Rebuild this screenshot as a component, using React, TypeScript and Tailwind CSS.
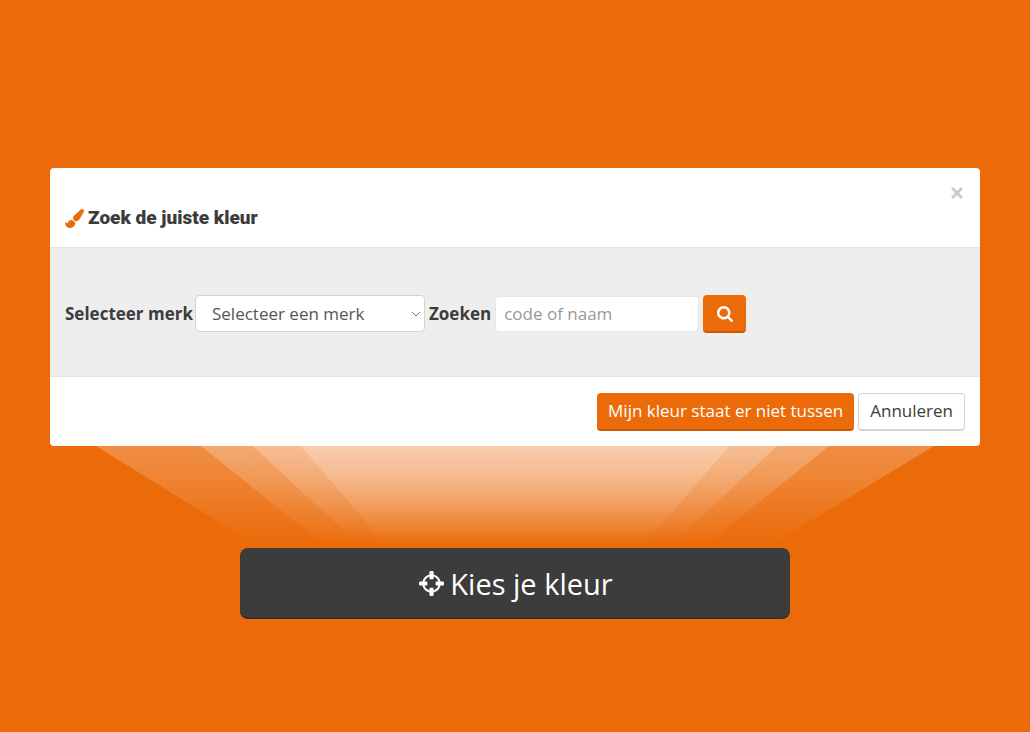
import React from "react";

function Glyph({ d, className, box = 1792 }: { d: string; className: string; box?: number }) {
  return (
    <svg viewBox={`0 0 ${box} ${box}`} className={className} fill="currentColor" aria-hidden="true">
      <path d={d} />
    </svg>
  );
}

const BRUSH =
  "M1615 0q70 0 122.5 46.5t52.5 116.5q0 63-45 151-332 629-465 752-97 91-218 91-126 0-216.5-92.5t-90.5-219.5q0-128 92-212l638-579q59-54 130-54zm-909 1034q39 76 106.5 130t150.5 76l1 71q4 213-129.5 347t-348.5 134q-123 0-218-46.5t-152.5-127.5-86.5-183-29-220q7 5 41 30t62 44.5 59 36.5 46 17q41 0 55-37 25-66 57.5-112.5t69.5-76 88-47.5 103-25.5 125-10.5z";
const SEARCH =
  "M1152 704q0-185-131.5-316.5t-316.5-131.5-316.5 131.5-131.5 316.5 131.5 316.5 316.5 131.5 316.5-131.5 131.5-316.5zm512 832q0 52-38 90t-90 38q-54 0-90-38l-343-342q-179 124-399 124-143 0-273.5-55.5t-225-150-150-225-55.5-273.5 55.5-273.5 150-225 225-150 273.5-55.5 273.5 55.5 225 150 150 225 55.5 273.5q0 220-124 399l343 343q37 37 37 90z";
const CROSSHAIRS =
  "M1325 1024h-109q-26 0-45-19t-19-45v-128q0-26 19-45t45-19h109q-32-108-112.5-188.5t-188.5-112.5v109q0 26-19 45t-45 19h-128q-26 0-45-19t-19-45v-109q-108 32-188.5 112.5t-112.5 188.5h109q26 0 45 19t19 45v128q0 26-19 45t-45 19h-109q32 108 112.5 188.5t188.5 112.5v-109q0-26 19-45t45-19h128q26 0 45 19t19 45v109q108-32 188.5-112.5t112.5-188.5zm339-192v128q0 26-19 45t-45 19h-143q-37 161-154.5 278.5t-278.5 154.5v143q0 26-19 45t-45 19h-128q-26 0-45-19t-19-45v-143q-161-37-278.5-154.5t-154.5-278.5h-143q-26 0-45-19t-19-45v-128q0-26 19-45t45-19h143q37-161 154.5-278.5t278.5-154.5v-143q0-26 19-45t45-19h128q26 0 45 19t19 45v143q161 37 278.5 154.5t154.5 278.5h143q26 0 45 19t19 45z";

function Rays() {
  return (
    <svg viewBox="0 0 930 102" preserveAspectRatio="none" className="block h-[102px] w-full" aria-hidden="true">
      <defs>
        <linearGradient id="ray" x1="0" y1="0" x2="0" y2="102" gradientUnits="userSpaceOnUse">
          <stop offset="0" stopColor="#fff" stopOpacity="0.24" />
          <stop offset="0.3" stopColor="#fff" stopOpacity="0.175" />
          <stop offset="0.65" stopColor="#fff" stopOpacity="0.08" />
          <stop offset="0.97" stopColor="#fff" stopOpacity="0" />
        </linearGradient>
      </defs>
      <g fill="url(#ray)">
        <polygon points="46,0 884,0 716,102 210,102" />
        <polygon points="151,0 779,0 652,102 278,102" />
        <polygon points="203,0 727,0 618,102 312,102" />
        <polygon points="251,0 679,0 592,102 338,102" />
      </g>
    </svg>
  );
}

export default function App() {
  return (
    <main className="flex min-h-screen flex-col bg-[#eb6b0a] px-[50px] pt-[168px] pb-28 font-['Open_Sans',sans-serif] text-[17px] leading-6 text-[#3c3c3c]">
      <section role="dialog" aria-labelledby="title" className="rounded bg-white">
        <header className="flex h-20 items-start justify-between border-b border-[#e5e5e5] px-[15px]">
          <h1 id="title" className="mt-9 flex items-center gap-1 font-['Roboto',sans-serif] text-[19px] leading-7 font-black">
            <Glyph d={BRUSH} className="size-[19px] text-[#eb6b0a]" />
            Zoek de juiste kleur
          </h1>
          <button type="button" aria-label="Sluiten" className="mt-[17px] flex h-4 w-4 items-center justify-center text-[#cbcbcb]">
            <svg viewBox="0 0 12 12" className="size-3" stroke="currentColor" strokeWidth="3" aria-hidden="true">
              <path d="M1 1l10 10M11 1L1 11" />
            </svg>
          </button>
        </header>
        <form className="flex min-h-[129px] flex-wrap items-center border-b border-[#e5e5e5] bg-[#eee] px-[15px] pt-[3px]" onSubmit={(e) => e.preventDefault()}>
          <label htmlFor="brand" className="mr-0.5 font-bold">Selecteer merk</label>
          <span className="relative mr-1 text-[#555]">
            <select id="brand" className="block h-[37px] w-[230px] appearance-none rounded border border-[#d4d4d4] bg-white pl-4">
              <option>Selecteer een merk</option>
            </select>
            <svg viewBox="0 0 10 6" className="pointer-events-none absolute top-4 right-1 h-[6px] w-[10px]" fill="none" stroke="#777" aria-hidden="true">
              <path d="M1 1l4 4 4-4" />
            </svg>
          </span>
          <label htmlFor="query" className="mr-1 font-bold">Zoeken</label>
          <input id="query" placeholder="code of naam" className="mr-1 h-9 w-[204px] rounded border border-[#e8e8e8] bg-white px-2 placeholder:text-[#999]" />
          <button type="submit" aria-label="Zoeken" className="flex h-[38px] w-[43px] items-center justify-center rounded border-b-2 border-[#cd5800] bg-[#eb6b0a] pt-0.5 text-white">
            <Glyph d={SEARCH} box={1664} className="size-4" />
          </button>
        </form>
        <footer className="flex min-h-[69px] items-center justify-end gap-1 px-[15px]">
          <button type="button" className="h-[38px] rounded border-b-2 border-[#cd5800] bg-[#eb6b0a] px-[11px] text-white">
            Mijn kleur staat er niet tussen
          </button>
          <button type="button" className="h-[38px] rounded border border-b-2 border-[#d4d4d4] bg-white px-[11px]">Annuleren</button>
        </footer>
      </section>
      <Rays />
      <button type="button" className="mx-auto flex h-[71px] w-[550px] max-w-full items-center justify-center gap-1 rounded-lg border-b-2 border-[#303030] bg-[#3c3c3c] pt-0.5 text-[29px] text-white">
        <Glyph d={CROSSHAIRS} className="size-[29px]" />
        Kies je kleur
      </button>
    </main>
  );
}
